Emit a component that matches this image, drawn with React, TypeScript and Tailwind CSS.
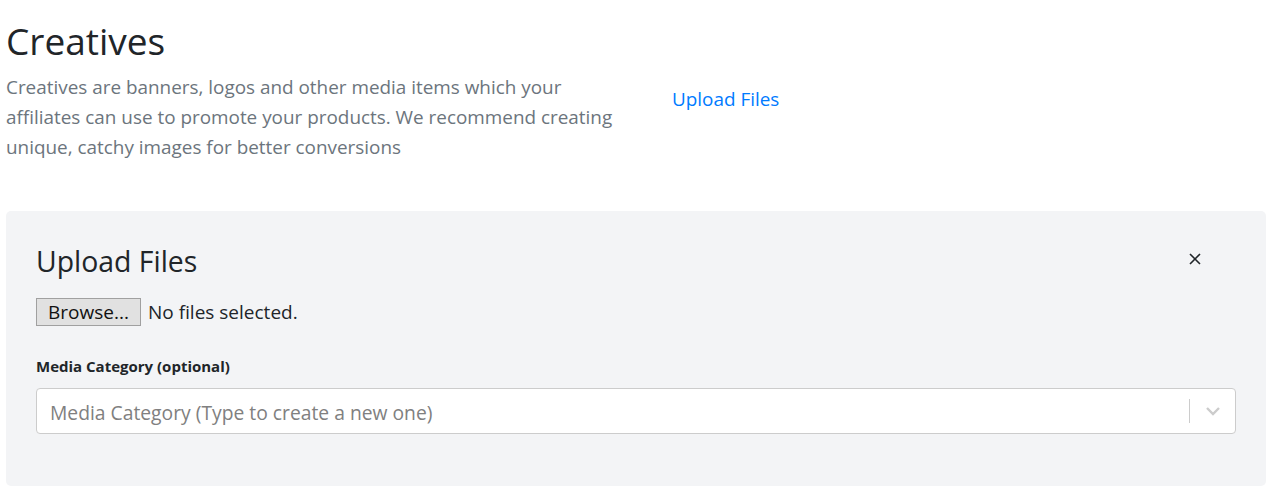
export default function App() {
  return (
    <div className="min-h-[488px] bg-white px-[6px] pt-[17px] text-[#212529]" style={{ fontFamily: '"Open Sans", "Noto Sans", sans-serif' }}>
      <div className="flex items-start">
        <div className="w-[636px] shrink-0">
          <h1 className="text-[37px] leading-[48px] font-normal">Creatives</h1>
          <p className="mt-[7px] w-[620px] text-[18.9px] leading-[30px] text-[#6c757d]">
            Creatives are banners, logos and other media items which your affiliates can use to promote your products. We recommend creating unique, catchy images for better conversions
          </p>
        </div>
        <a href="#" className="ml-[30px] mt-[67px] text-[18.9px] leading-[30px] text-[#007bff]">
          Upload Files
        </a>
      </div>

      <div className="mt-[49px] rounded-[5px] bg-[#f3f4f6] px-[30px] pt-[32px] pb-[52px]">
        <div className="flex items-start justify-between">
          <h3 className="text-[28.4px] leading-[36px] font-normal">Upload Files</h3>
          <button className="mr-[34px] mt-[9px] text-[#212529]">
            <svg width="14" height="14" viewBox="0 0 14 14" fill="none" stroke="currentColor" strokeWidth="1.6">
              <path d="M2 2 L12 12 M12 2 L2 12" />
            </svg>
          </button>
        </div>

        <div className="mt-[19px] flex items-center gap-[7px]">
          <span className="flex h-[28px] w-[105px] items-center justify-center border border-[#a0a0a0] bg-[#e1e1e1] text-[19px] text-[#111]">
            Browse...
          </span>
          <span className="text-[19px]">No files selected.</span>
        </div>

        <label className="mt-[29px] block text-[15px] leading-[20px] font-bold">Media Category (optional)</label>

        <div className="mt-[12px] flex h-[46px] items-center rounded-[4px] border border-[#cccccc] bg-white">
          <span className="flex-1 pl-[13px] pt-[5px] text-[19.3px] text-[#808080]">Media Category (Type to create a new one)</span>
          <span className="h-[24px] w-px bg-[#cccccc]" />
          <span className="flex w-[45px] items-center justify-center text-[#cccccc]">
            <svg width="16" height="10" viewBox="0 0 16 10" fill="none" stroke="currentColor" strokeWidth="2.4">
              <path d="M2 2 L8 8 L14 2" />
            </svg>
          </span>
        </div>
      </div>
    </div>
  );
}
